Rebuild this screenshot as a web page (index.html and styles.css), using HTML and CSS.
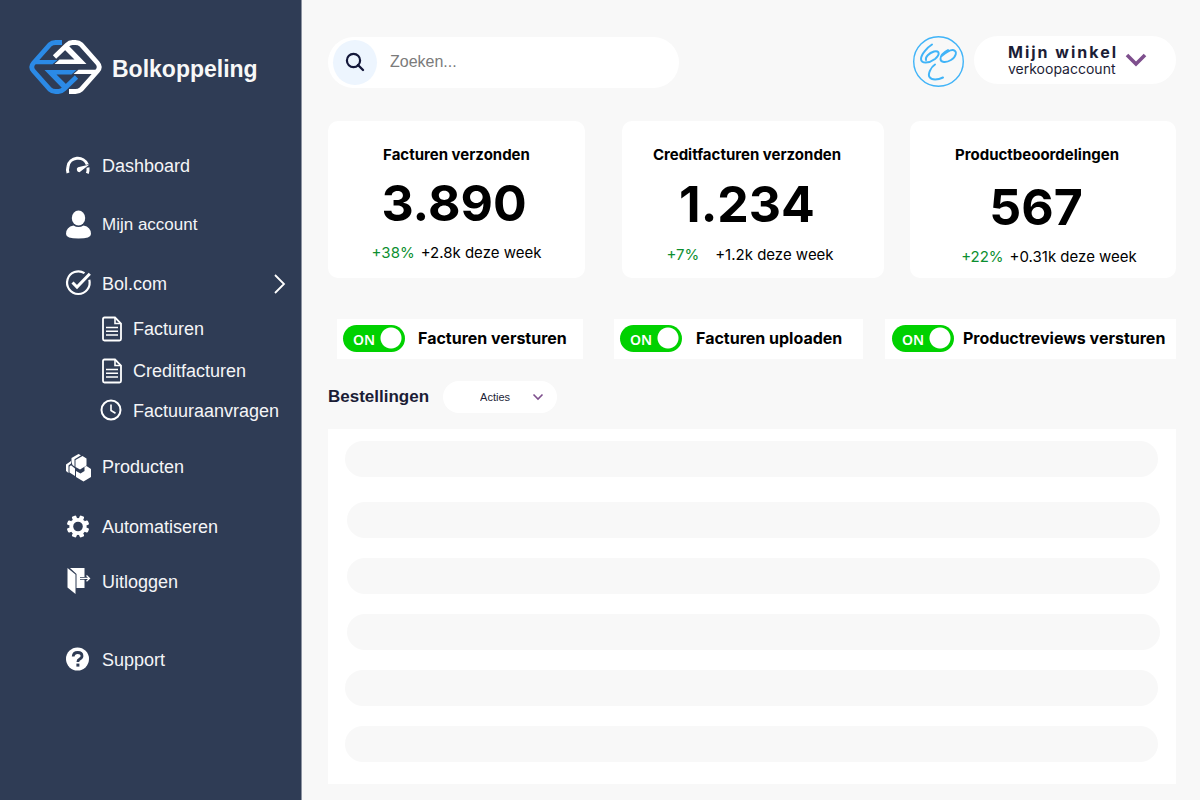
FILE: index.html
```html
<!DOCTYPE html>
<html lang="nl">
<head>
<meta charset="utf-8">
<meta name="viewport" content="width=device-width, initial-scale=1">
<title>Bolkoppeling</title>
<link rel="stylesheet" href="styles.css">
</head>
<body>
<div class="app">
  <aside class="sidebar">
    <a class="brand" href="#">
      <svg class="brand-logo" viewBox="0 0 72 54" aria-hidden="true">
        <defs>
          <g id="half">
            <path d="M25 17L37.500 5Q40 2.500 43 2.500H46Q49.500 2.500 51.500 4.500L68 23Q71.500 27 68 31L51.500 49.500Q49.500 51.500 46 51.500H39.500" fill="none" stroke="currentColor" stroke-width="4.800"/>
            <path d="M25 24L30 19.500H45L34.500 9L39 5.500L57 24ZM44 34L49 29.700H68L65 34Z" fill="currentColor"/>
          </g>
        </defs>
        <g color="#2b8ae6"><use href="#half" transform="rotate(180 36 27)"/></g>
        <g color="#ffffff"><use href="#half"/></g>
      </svg>
      <span>Bolkoppeling</span>
    </a>
    <nav class="nav">
      <a class="nav-item" href="#">
        <svg class="icon" viewBox="0 0 26 28"><path d="M2 22Q1 19 2 15.500A10 9.500 0 0 1 21.300 13.500M22 16.500Q22.300 20 21.300 22.300" fill="none" stroke="#fff" stroke-width="3"/><path d="M23.500 13.500L12 16.200A2.800 2.800 0 0 0 13.500 21.300Z" fill="#fff"/></svg>
        <span>Dashboard</span>
      </a>
      <a class="nav-item nav-account" href="#">
        <svg class="icon" viewBox="0 0 26 28"><ellipse cx="12.500" cy="8" rx="6.700" ry="7.500" fill="#fff"/><path d="M7.500 15.500Q12.500 18.500 17.500 15.500Q25 17 25 24Q25 28.500 12.500 28.500T0 24Q0 17 7.500 15.500Z" fill="#fff"/></svg>
        <span>Mijn account</span>
      </a>
      <a class="nav-item nav-bol" href="#">
        <svg class="icon" viewBox="0 0 26 28"><path d="M18.500 4.200A11.300 11.300 0 1 0 23.300 10.800" fill="none" stroke="#fff" stroke-width="2.200"/><path d="M6.500 13.500L11 18L23.800 4.800" fill="none" stroke="#fff" stroke-width="3"/></svg>
        <span>Bol.com</span>
        <svg class="nav-arrow" viewBox="0 0 14 22"><path d="M2 2L11 11L2 20" fill="none" stroke="#fff" stroke-width="1.800"/></svg>
      </a>
      <a class="nav-item nav-sub nav-invoices" href="#">
        <svg class="icon-small" viewBox="0 0 22 28"><path d="M14 2.500H3.500Q2 2.500 2 4V24Q2 25.500 3.500 25.500H18.500Q20 25.500 20 24V8.500Z" fill="none" stroke="#fff" stroke-width="1.800"/><path d="M14 2.500V8.500H20M5 12.500H17M5 16.200H17M5 20H17" fill="none" stroke="#fff" stroke-width="1.600"/></svg>
        <span>Facturen</span>
      </a>
      <a class="nav-item nav-sub nav-credit" href="#">
        <svg class="icon-small" viewBox="0 0 22 28"><path d="M14 2.500H3.500Q2 2.500 2 4V24Q2 25.500 3.500 25.500H18.500Q20 25.500 20 24V8.500Z" fill="none" stroke="#fff" stroke-width="1.800"/><path d="M14 2.500V8.500H20M5 12.500H17M5 16.200H17M5 20H17" fill="none" stroke="#fff" stroke-width="1.600"/></svg>
        <span>Creditfacturen</span>
      </a>
      <a class="nav-item nav-sub nav-requests" href="#">
        <svg class="icon-small" viewBox="0 0 22 28"><circle cx="10" cy="13" r="9.500" fill="none" stroke="#fff" stroke-width="2"/><path d="M10 7.500V13.500L14.500 16.300" fill="none" stroke="#fff" stroke-width="1.600"/></svg>
        <span>Factuuraanvragen</span>
      </a>
      <a class="nav-item nav-products" href="#">
        <svg class="icon" viewBox="0 0 26 28"><path d="M5.500 10V6L12.500 2L15 3.200L8.500 7.200V14.500L6.500 13ZM9.500 8L16.500 4L20.500 6.500V13.500L14 17.500L9.500 15ZM0 12.500L5 9V11.500L2.500 13.500V21L0 19ZM3.500 14.500L5 13.200L9 16.500V24L3.500 20.500ZM10 19L14.500 21.500L18.500 19V15L20.500 14L25 17V25L17.500 29.500L10 25Z" fill="#fff"/></svg>
        <span>Producten</span>
      </a>
      <a class="nav-item nav-auto" href="#">
        <svg class="icon" viewBox="0 0 26 28"><g fill="#fff"><g transform="rotate(22.500 12 14.500)"><rect id="tooth" x="9.700" y="3.200" width="4.600" height="22.600" rx="1.200"/><use href="#tooth" transform="rotate(45 12 14.500)"/><use href="#tooth" transform="rotate(90 12 14.500)"/><use href="#tooth" transform="rotate(135 12 14.500)"/></g><circle cx="12" cy="14.500" r="8.600"/></g><circle cx="12" cy="14.500" r="4.800" fill="#2f3c55"/></svg>
        <span>Automatiseren</span>
      </a>
      <a class="nav-item nav-logout" href="#">
        <svg class="icon" viewBox="0 0 26 28"><path d="M1.500 1L9.500 7.500V27L1.500 20.500ZM4 .900H18.500V10H14V12.800H18.500V21H10.500V7Z" fill="#fff"/><path d="M14 11.400H23M20.500 8.500L23.500 11.400L20.500 14.300" fill="none" stroke="#fff" stroke-width="1.300"/></svg>
        <span>Uitloggen</span>
      </a>
      <a class="nav-item nav-support" href="#">
        <svg class="icon" viewBox="0 0 26 28"><circle cx="11.500" cy="14" r="11.500" fill="#fff"/><path d="M7.200 11.500Q7.500 7.500 11.700 7.500Q16 7.500 16 11Q16 13 13.500 14.200Q11.900 15 11.900 17" fill="none" stroke="#2f3c55" stroke-width="2.800"/><rect x="10.400" y="18.600" width="3" height="3" fill="#2f3c55"/></svg>
        <span>Support</span>
      </a>
    </nav>
  </aside>

  <main class="main">
    <header class="topbar">
      <form class="search">
        <button class="search-button" type="submit" aria-label="Zoeken">
          <svg width="22" height="22" viewBox="0 0 22 22"><circle cx="9.500" cy="9.500" r="6.600" fill="none" stroke="#14183a" stroke-width="2.200"/><path d="M14 14L19 19" stroke="#14183a" stroke-width="2.400" stroke-linecap="round"/></svg>
        </button>
        <input class="search-input" type="search" placeholder="Zoeken..." aria-label="Zoeken">
      </form>
      <div class="profile">
        <svg class="shop-logo" viewBox="0 0 52 52" aria-hidden="true"><g fill="none" stroke="#41b4f8" stroke-linecap="round"><circle cx="25.500" cy="25.500" r="24.800" stroke-width="1.400"/><path d="M19 8.500C15 11 8 18 8 23C8 28 16 27.500 22 23C27 19 27 14 21 15.500C16 17 12 21 13 24" stroke-width="2"/><path d="M28 20.500C31 18 36 13.500 40 14C45 15 43 21 38 24C33 27 27.500 26.500 27.500 23C27.500 19 32 15.500 35 14" stroke-width="1.900"/><path d="M22 28.500C18 31 14.500 38 16.500 41C18.500 44.500 25 44 30 41.500" stroke-width="2"/></g></svg>
        <button class="account" type="button">
          <span class="account-text">
            <span class="account-name">Mijn winkel</span>
            <span class="account-type">verkoopaccount</span>
          </span>
          <svg class="account-arrow" width="22" height="14" viewBox="0 0 22 14"><path d="M2 2L11 11L20 2" fill="none" stroke="#7e4f8d" stroke-width="3.600"/></svg>
        </button>
      </div>
    </header>

    <section class="stats">
      <article class="card card-invoices">
        <h2 class="card-title">Facturen verzonden</h2>
        <p class="card-value">3.890</p>
        <p class="card-delta"><span class="up">+38%</span><span>+2.8k deze week</span></p>
      </article>
      <article class="card card-credit">
        <h2 class="card-title">Creditfacturen verzonden</h2>
        <p class="card-value">1.234</p>
        <p class="card-delta"><span class="up">+7%</span><span>+1.2k deze week</span></p>
      </article>
      <article class="card card-reviews">
        <h2 class="card-title">Productbeoordelingen</h2>
        <p class="card-value">567</p>
        <p class="card-delta"><span class="up">+22%</span><span>+0.31k deze week</span></p>
      </article>
    </section>

    <section class="toggles">
      <label class="toggle toggle-send">
        <span class="switch"><input class="switch-input" type="checkbox" checked><span class="switch-text">ON</span></span>
        <span class="toggle-label">Facturen versturen</span>
      </label>
      <label class="toggle toggle-upload">
        <span class="switch"><input class="switch-input" type="checkbox" checked><span class="switch-text">ON</span></span>
        <span class="toggle-label">Facturen uploaden</span>
      </label>
      <label class="toggle toggle-reviews">
        <span class="switch"><input class="switch-input" type="checkbox" checked><span class="switch-text">ON</span></span>
        <span class="toggle-label">Productreviews versturen</span>
      </label>
    </section>

    <section class="orders">
      <div class="orders-head">
        <h2 class="orders-title">Bestellingen</h2>
        <div class="actions">
          <select class="actions-select" aria-label="Acties"><option>Acties</option></select>
          <svg class="actions-arrow" viewBox="0 0 12 8"><path d="M1.500 1.500L6 6L10.500 1.500" fill="none" stroke="#7e4f8d" stroke-width="1.600"/></svg>
        </div>
      </div>
      <div class="orders-panel">
        <div class="order-row"></div>
        <div class="order-row order-row-shift order-row-second"></div>
        <div class="order-row order-row-shift"></div>
        <div class="order-row order-row-shift"></div>
        <div class="order-row"></div>
        <div class="order-row"></div>
      </div>
    </section>
  </main>
</div>
</body>
</html>
```
FILE: styles.css
```css
* {
  box-sizing: border-box;
}

body {
  margin: 0;
  background: #f8f8f8;
  color: #000;
  font-family: Inter, "Liberation Sans", sans-serif;
}

button,
input,
select {
  margin: 0;
  border: 0;
  font: inherit;
}

h2,
p {
  margin: 0;
}

.app {
  display: flex;
  min-height: 100vh;
}

/* Sidebar */

.sidebar {
  flex: 0 0 302px;
  padding: 40px 14px 0 29px;
  background: #2f3c55;
  border-right: 1px solid #8d94a2;
  font-family: "Liberation Sans", Arial, sans-serif;
}

.brand {
  display: flex;
  align-items: center;
  gap: 10px;
  color: #f8f8f8;
  font-size: 23px;
  font-weight: 700;
  line-height: 28px;
  text-decoration: none;
}

.brand span {
  padding-top: 4px;
}

.brand-logo {
  width: 73px;
  height: 54px;
}

.nav {
  display: flex;
  flex-direction: column;
  padding: 58px 0 0 37px;
}

.nav-item {
  display: flex;
  align-items: center;
  gap: 10px;
  height: 28px;
  color: #f4f5f7;
  font-size: 18px;
  line-height: 28px;
  text-decoration: none;
}

.icon {
  flex: none;
  width: 26px;
  height: 28px;
  margin-bottom: 2px;
  overflow: visible;
}

.icon-small {
  flex: none;
  width: 22px;
  height: 28px;
  margin-bottom: 1px;
  overflow: visible;
}

.nav-arrow {
  width: 14px;
  height: 22px;
  margin-left: auto;
}

.nav-sub {
  padding-left: 35px;
}

.nav-account {
  margin-top: 31px;
  font-size: 17px;
}

.nav-bol {
  margin-top: 31px;
}

.nav-invoices {
  margin-top: 17px;
}

.nav-credit {
  margin-top: 14px;
}

.nav-requests {
  margin-top: 12px;
}

.nav-products {
  margin-top: 28px;
}

.nav-auto {
  margin-top: 32px;
}

.nav-logout {
  margin-top: 27px;
}

.nav-support {
  margin-top: 50px;
}

/* Main column */

.main {
  flex: 1;
  min-width: 0;
  padding: 36px 24px 15px 26px;
}

.topbar {
  display: flex;
  justify-content: space-between;
  align-items: center;
}

.search {
  display: flex;
  align-items: center;
  gap: 13px;
  width: 351px;
  padding: 3px 24px 3px 5px;
  border-radius: 26px;
  background: #fff;
}

.search-button {
  display: grid;
  place-items: center;
  flex: none;
  width: 44px;
  height: 45px;
  padding: 0;
  border-radius: 50%;
  background: #edf5fe;
}

.search-input {
  flex: 1;
  min-width: 0;
  padding: 0;
  background: none;
  outline: 0;
  font-family: "Liberation Sans", Arial, sans-serif;
  font-size: 16px;
}

.search-input::placeholder {
  color: #7b7b7b;
}

.profile {
  display: flex;
  align-items: flex-start;
  gap: 9px;
}

.shop-logo {
  width: 52px;
  height: 52px;
}

.account {
  display: flex;
  align-items: center;
  gap: 7px;
  width: 202px;
  height: 48px;
  padding: 0 29px 0 34px;
  border-radius: 24px;
  background: #fff;
  color: #1b1d36;
  text-align: left;
}

.account-text {
  display: flex;
  flex-direction: column;
}

.account-name {
  font-size: 16px;
  font-weight: 700;
  letter-spacing: 2px;
  line-height: 18px;
  white-space: nowrap;
}

.account-type {
  font-size: 14px;
  line-height: 16px;
}

.account-arrow {
  flex: none;
}

/* Statistics */

.stats {
  display: grid;
  grid-template-columns: 257fr 273fr 266fr;
  column-gap: 26px;
  margin-top: 33px;
}

.card {
  height: 157px;
  padding-top: 24px;
  border-radius: 10px;
  background: #fff;
  text-align: center;
}

.card-title {
  font-size: 15px;
  font-weight: 700;
  line-height: 20px;
}

.card-value {
  padding-top: 8px;
  font-size: 50px;
  font-weight: 700;
  line-height: 60px;
}

.card-delta {
  display: flex;
  justify-content: center;
  gap: 6px;
  padding-top: 10px;
  font-size: 15px;
  line-height: 20px;
}

.up {
  color: #0c8f30;
}

.card-invoices .card-value {
  padding-right: 5px;
}

.card-credit {
  margin-left: 11px;
  padding-right: 12px;
}

.card-credit .card-value {
  padding-top: 9px;
}

.card-credit .card-delta {
  gap: 16px;
  padding: 11px 0 0 6px;
}

.card-reviews {
  padding-right: 12px;
}

.card-reviews .card-value {
  padding: 12px 2px 0 0;
}

.card-reviews .card-delta {
  padding-left: 24px;
}

/* Switches */

.toggles {
  display: grid;
  grid-template-columns: 246fr 258fr 291fr;
  column-gap: 22px;
  margin-top: 41px;
  padding-left: 9px;
}

.toggle {
  display: flex;
  align-items: center;
  gap: 14px;
  height: 40px;
  padding: 0 0 2px 6px;
  background: #fff;
  font-size: 16px;
  font-weight: 700;
  white-space: nowrap;
}

.toggle-send {
  gap: 13px;
}

.toggle-upload {
  margin-left: 9px;
}

.toggle-reviews {
  gap: 9px;
  padding-left: 7px;
}

.switch {
  position: relative;
  flex: none;
  width: 62px;
  height: 27px;
}

.switch-input {
  display: block;
  width: 100%;
  height: 100%;
  border-radius: 14px;
  appearance: none;
  background: radial-gradient(circle at 48px 13px, #fff 10px, #00d100 11px);
}

.switch-text {
  position: absolute;
  top: 5px;
  left: 10px;
  color: #fff;
  font-family: "Noto Sans", sans-serif;
  font-size: 14px;
  font-weight: 600;
  line-height: 20px;
}

/* Orders */

.orders-head {
  display: flex;
  align-items: center;
  gap: 14px;
  margin-top: 22px;
}

.orders-title {
  color: #1b1d36;
  font-family: "Liberation Sans", Arial, sans-serif;
  font-size: 17px;
  font-weight: 700;
  line-height: 28px;
}

.actions {
  position: relative;
}

.actions-select {
  display: block;
  width: 114px;
  height: 32px;
  padding: 0 30px 0 37px;
  border-radius: 16px;
  appearance: none;
  background: #fff;
  color: #1b1d36;
  font-family: "Liberation Sans", Arial, sans-serif;
  font-size: 11px;
}

.actions-arrow {
  position: absolute;
  top: 12px;
  right: 13px;
  width: 12px;
  height: 8px;
  pointer-events: none;
}

.orders-panel {
  display: flex;
  flex-direction: column;
  gap: 20px;
  margin-top: 16px;
  padding: 12px 18px 22px 17px;
  background: #fff;
}

.order-row {
  height: 36px;
  border-radius: 18px;
  background: #f8f8f8;
}

.order-row-shift {
  margin-right: -2px;
  margin-left: 2px;
}

.order-row-second {
  margin-top: 5px;
}
```
